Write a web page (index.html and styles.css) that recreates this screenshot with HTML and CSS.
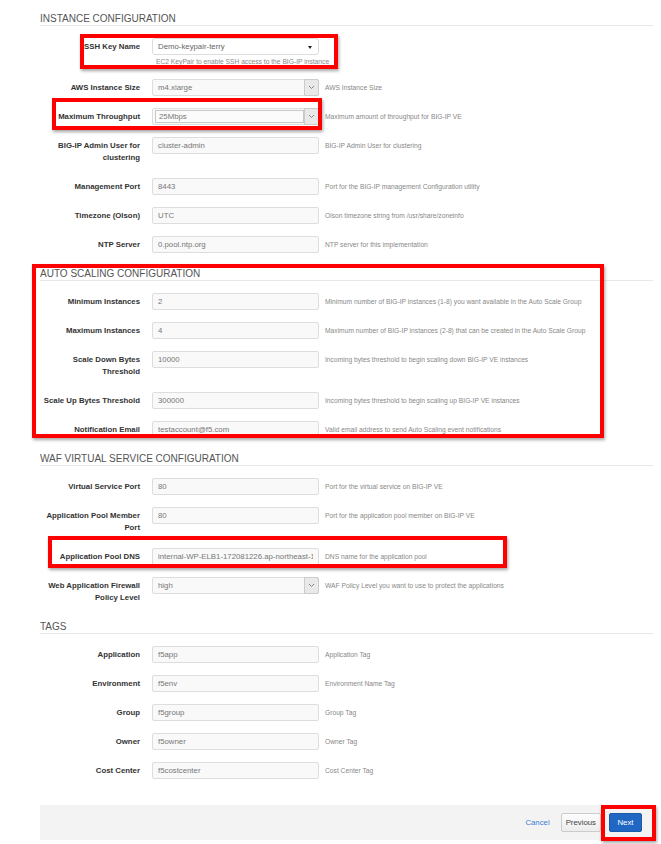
FILE: index.html
```html
<!DOCTYPE html>
<html lang="en">
<head>
    <meta charset="UTF-8">
    <title>Specify Details</title>
    <link rel="stylesheet" href="styles.css">
</head>
<body>
<div class="page">

    <section class="group">
        <h2 class="group-title">Instance Configuration</h2>
        <div class="field">
            <label>SSH Key Name</label>
            <div class="control">
                <div class="select select-plain">Demo-keypair-terry<span class="caret"></span></div>
                <div class="help-block">EC2 KeyPair to enable SSH access to the BIG-IP instance</div>
            </div>
        </div>
        <div class="field">
            <label>AWS Instance Size</label>
            <div class="select">m4.xlarge<span class="arrow"><svg width="7" height="5" viewBox="0 0 7 5"><path d="M1 1l2.5 2.5L6 1" fill="none" stroke="#888" stroke-width="1"/></svg></span></div>
            <div class="help">AWS Instance Size</div>
        </div>
        <div class="field">
            <label>Maximum Throughput</label>
            <div class="select select-focus"><span class="inner">25Mbps</span><span class="arrow"><svg width="7" height="5" viewBox="0 0 7 5"><path d="M1 1l2.5 2.5L6 1" fill="none" stroke="#888" stroke-width="1"/></svg></span></div>
            <div class="help">Maximum amount of throughput for BIG-IP VE</div>
        </div>
        <div class="field">
            <label>BIG-IP Admin User for clustering</label>
            <input type="text" value="cluster-admin" readonly>
            <div class="help">BIG-IP Admin User for clustering</div>
        </div>
        <div class="field">
            <label>Management Port</label>
            <input type="text" value="8443" readonly>
            <div class="help">Port for the BIG-IP management Configuration utility</div>
        </div>
        <div class="field">
            <label>Timezone (Olson)</label>
            <input type="text" value="UTC" readonly>
            <div class="help">Olson timezone string from /usr/share/zoneinfo</div>
        </div>
        <div class="field">
            <label>NTP Server</label>
            <input type="text" value="0.pool.ntp.org" readonly>
            <div class="help">NTP server for this implementation</div>
        </div>
    </section>

    <section class="group">
        <h2 class="group-title">Auto Scaling Configuration</h2>
        <div class="field">
            <label>Minimum Instances</label>
            <input type="text" value="2" readonly>
            <div class="help">Minimum number of BIG-IP instances (1-8) you want available in the Auto Scale Group</div>
        </div>
        <div class="field">
            <label>Maximum Instances</label>
            <input type="text" value="4" readonly>
            <div class="help">Maximum number of BIG-IP instances (2-8) that can be created in the Auto Scale Group</div>
        </div>
        <div class="field">
            <label>Scale Down Bytes Threshold</label>
            <input type="text" value="10000" readonly>
            <div class="help">Incoming bytes threshold to begin scaling down BIG-IP VE instances</div>
        </div>
        <div class="field">
            <label>Scale Up Bytes Threshold</label>
            <input type="text" value="300000" readonly>
            <div class="help">Incoming bytes threshold to begin scaling up BIG-IP VE instances</div>
        </div>
        <div class="field">
            <label>Notification Email</label>
            <input type="text" value="testaccount@f5.com" readonly>
            <div class="help">Valid email address to send Auto Scaling event notifications</div>
        </div>
    </section>

    <section class="group">
        <h2 class="group-title">WAF Virtual Service Configuration</h2>
        <div class="field">
            <label>Virtual Service Port</label>
            <input type="text" value="80" readonly>
            <div class="help">Port for the virtual service on BIG-IP VE</div>
        </div>
        <div class="field">
            <label>Application Pool Member Port</label>
            <input type="text" value="80" readonly>
            <div class="help">Port for the application pool member on BIG-IP VE</div>
        </div>
        <div class="field">
            <label>Application Pool DNS</label>
            <input type="text" value="internal-WP-ELB1-172081226.ap-northeast-1.elb.amazonaws.com" readonly>
            <div class="help">DNS name for the application pool</div>
        </div>
        <div class="field">
            <label>Web Application Firewall Policy Level</label>
            <div class="select">high<span class="arrow"><svg width="7" height="5" viewBox="0 0 7 5"><path d="M1 1l2.5 2.5L6 1" fill="none" stroke="#888" stroke-width="1"/></svg></span></div>
            <div class="help">WAF Policy Level you want to use to protect the applications</div>
        </div>
    </section>

    <section class="group">
        <h2 class="group-title">Tags</h2>
        <div class="field">
            <label>Application</label>
            <input type="text" value="f5app" readonly>
            <div class="help">Application Tag</div>
        </div>
        <div class="field">
            <label>Environment</label>
            <input type="text" value="f5env" readonly>
            <div class="help">Environment Name Tag</div>
        </div>
        <div class="field">
            <label>Group</label>
            <input type="text" value="f5group" readonly>
            <div class="help">Group Tag</div>
        </div>
        <div class="field">
            <label>Owner</label>
            <input type="text" value="f5owner" readonly>
            <div class="help">Owner Tag</div>
        </div>
        <div class="field">
            <label>Cost Center</label>
            <input type="text" value="f5costcenter" readonly>
            <div class="help">Cost Center Tag</div>
        </div>
    </section>

    <div class="actions">
        <a class="cancel" href="#">Cancel</a>
        <button class="btn">Previous</button>
        <button class="btn btn-primary">Next</button>
    </div>

    <!-- red call-out frames -->
    <div class="mark mark-ssh"></div>
    <div class="mark mark-throughput"></div>
    <div class="mark mark-scaling"></div>
    <div class="mark mark-dns"></div>
    <div class="mark mark-next"></div>
</div>
</body>
</html>
```

FILE: styles.css
```css
html, body {margin: 0; padding: 0; background: #fff;}
body {font-family: "Liberation Sans", Arial, sans-serif; color: #333;}

.page {position: relative; padding: 11px 8px 6px 40px;}

.group + .group {padding-top: 1px;}
.group-title {
    margin: 0 0 12px;
    padding: 1px 0 0;
    border-bottom: 1px solid #e8e8e8;
    font-size: 10px;
    line-height: 13px;
    font-weight: normal;
    color: #555;
    text-transform: uppercase;
}

.field {
    display: grid;
    grid-template-columns: 112px 167px 1fr;
    align-items: start;
    margin-bottom: 12px;
}
.field label {
    padding: 3px 12px 2px 0;
    font-size: 7.8px;
    line-height: 12px;
    font-weight: bold;
    color: #333;
    text-align: right;
}

.field input,
.select {
    box-sizing: border-box;
    width: 100%;
    height: 17px;
    margin: 0;
    padding: 0 5px;
    border: 1px solid #ddd;
    border-radius: 2px;
    background: #f9f9f9;
    font-family: inherit;
    font-size: 7.8px;
    color: #777;
    outline: none;
}

.select {position: relative; display: flex; align-items: center;}
.select .arrow {
    position: absolute; top: -1px; right: -1px; bottom: -1px;
    width: 13px;
    display: flex; align-items: center; justify-content: center;
    background: #e9e9e9;
    border: 1px solid #ccc;
    border-radius: 0 2px 2px 0;
}
.select-plain {background: #fff; border-radius: 3px; color: #666;}
.select-plain .caret {
    position: absolute; right: 6px; top: 7px;
    border-left: 2.5px solid transparent;
    border-right: 2.5px solid transparent;
    border-top: 3px solid #222;
}
.select-focus {padding: 0 14px 0 2px;}
.select-focus .inner {
    flex: 1;
    height: 11px;
    padding: 0 3px;
    line-height: 11px;
    border: 1px solid #c8c8c8;
    background: #fbfbfb;
}

.help-block {
    margin-top: 2px;
    padding-left: 4px;
    font-size: 6.7px;
    line-height: 10px;
    color: #888;
    white-space: nowrap;
}
.help {
    padding-left: 6px;
    font-size: 6.7px;
    line-height: 17px;
    color: #888;
    white-space: nowrap;
}

.actions {
    display: flex;
    align-items: center;
    justify-content: flex-end;
    height: 35px;
    margin-top: 26px;
    padding-right: 11px;
    background: #f3f3f3;
}
.cancel {
    margin-right: 11px;
    font-size: 7.8px;
    color: #3b7dd8;
    text-decoration: none;
}
.btn {
    height: 19px;
    padding: 0 4px;
    border: 1px solid #ccc;
    border-radius: 2px;
    background: linear-gradient(#fdfdfd, #ececec);
    font-family: inherit;
    font-size: 7.8px;
    color: #444;
}
.btn-primary {
    margin-left: 8px;
    width: 33px;
    padding: 0;
    border-color: #1a5aa8;
    background: #1f67c2;
    color: #fff;
}

.mark {
    position: absolute;
    box-sizing: border-box;
    border: 4px solid #ff0000;
    box-shadow: 1px 2px 3px rgba(0, 0, 0, 0.35);
}
.mark-ssh {left: 80px; top: 34px; width: 258px; height: 35px;}
.mark-throughput {left: 52px; top: 98px; width: 270px; height: 32px;}
.mark-scaling {left: 32px; top: 264px; width: 572px; height: 174px;}
.mark-dns {left: 48px; top: 536px; width: 459px; height: 32px;}
.mark-next {left: 601px; top: 805px; width: 55px; height: 36px;}
```
